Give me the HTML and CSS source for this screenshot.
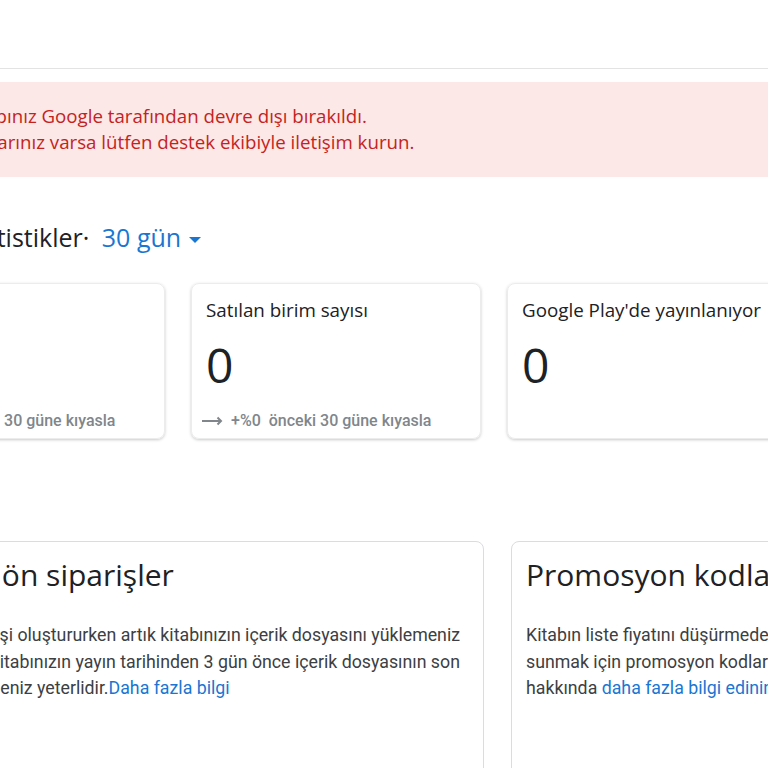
FILE: index.html
```html
<!DOCTYPE html>
<html>
<head>
    <meta charset="utf-8">
    <link rel="stylesheet" href="styles.css">
    <title>Kontrol paneli</title>
</head>
<body>
    <div class="topbar"></div>
    <div class="page">
        <div class="alert">
            <p>Hesabınız Google tarafından devre dışı bırakıldı.</p>
            <p>Sorularınız varsa lütfen destek ekibiyle iletişim kurun.</p>
        </div>

        <h2 class="stats-title">İstatistikler· <span class="range">30 gün <span class="caret"></span></span></h2>

        <div class="stats">
            <div class="stat-card">
                <div class="stat-name">Kazanç</div>
                <div class="stat-value">0</div>
                <div class="stat-trend">
                    <svg class="arrow" viewBox="0 0 24 12" width="24" height="12"><path d="M2 6h19M17.5 2.5l3.5 3.5-3.5 3.5" fill="none" stroke="#80868b" stroke-width="2"/></svg>
                    <span>+%0</span> önceki 30 güne kıyasla
                </div>
            </div>
            <div class="stat-card">
                <div class="stat-name">Satılan birim sayısı</div>
                <div class="stat-value">0</div>
                <div class="stat-trend">
                    <svg class="arrow" viewBox="0 0 24 12" width="24" height="12"><path d="M2 6h19M17.5 2.5l3.5 3.5-3.5 3.5" fill="none" stroke="#80868b" stroke-width="2"/></svg>
                    <span>+%0</span> önceki 30 güne kıyasla
                </div>
            </div>
            <div class="stat-card">
                <div class="stat-name">Google Play'de yayınlanıyor</div>
                <div class="stat-value">0</div>
            </div>
            <div class="stat-card">
                <div class="stat-name">Ön siparişler</div>
                <div class="stat-value">0</div>
            </div>
        </div>

        <div class="news">
            <div class="news-card">
                <h3>Çabuk ön siparişler</h3>
                <p>Bir ön siparişi oluştururken artık kitabınızın içerik dosyasını yüklemeniz<br>
                şart değil. Kitabınızın yayın tarihinden 3 gün önce içerik dosyasının son<br>
                hâlini eklemeniz yeterlidir.<a href="#">Daha fazla bilgi</a></p>
            </div>
            <div class="news-card">
                <h3>Promosyon kodları</h3>
                <p>Kitabın liste fiyatını düşürmeden okuyuculara indirim<br>
                sunmak için promosyon kodları oluşturabilirsiniz. Promosyon kodları<br>
                hakkında <a href="#">daha fazla bilgi edinin</a>.</p>
            </div>
        </div>
    </div>
</body>
</html>
```

FILE: styles.css
```css
body {
    margin: 0;
    overflow: hidden;
    background: #fff;
    color: #202124;
    font-family: Roboto, "Liberation Sans", sans-serif;
}
.topbar {
    height: 68px;
    border-bottom: 1px solid #e3e3e3;
}
.page {
    margin-left: -125px;
    width: 1300px;
    padding-top: 13px;
}
.alert {
    background: #fce8e6;
    color: #c5221f;
    font-family: "Open Sans", sans-serif;
    font-size: 18.7px;
    line-height: 26px;
    padding: 21px 0 22px 77px;
}
.alert p {
    margin: 0;
}
.stats-title {
    font-family: "Open Sans", sans-serif;
    font-weight: 400;
    font-size: 25px;
    margin: 44px 0 0 80px;
    line-height: 32px;
}
.range {
    color: #1976d2;
    margin-left: 6px;
}
.caret {
    display: inline-block;
    border-left: 6px solid transparent;
    border-right: 6px solid transparent;
    border-top: 6px solid #1976d2;
    vertical-align: middle;
    margin-left: 1px;
}
.stats {
    display: grid;
    grid-template-columns: repeat(4, 290px);
    gap: 26px;
    margin-top: 30px;
}
.stat-card {
    height: 156px;
    box-sizing: border-box;
    padding: 14px 14px 0;
    border-radius: 8px;
    box-shadow: 0 1px 3px rgba(60, 64, 67, 0.28);
    border: 1px solid #ececec;
}
.stat-name {
    font-family: "Open Sans", sans-serif;
    font-size: 18.8px;
    line-height: 24px;
}
.stat-value {
    font-family: "Open Sans", sans-serif;
    font-size: 48px;
    line-height: 56px;
    margin-top: 15px;
}
.stat-trend {
    margin-top: 18px;
    font-size: 16px;
    font-weight: 500;
    color: #80868b;
    display: flex;
    align-items: center;
}
.stat-trend .arrow {
    margin: 0 7px 0 -6px;
}
.stat-trend span {
    margin-right: 8px;
}
.news {
    display: grid;
    grid-template-columns: repeat(2, 593px);
    gap: 27px;
    margin: 102px 0 0 16px;
}
.news-card {
    border: 1px solid #dadce0;
    border-radius: 8px;
    height: 260px;
    padding: 0 14px;
}
.news-card h3 {
    font-family: "Open Sans", sans-serif;
    font-weight: 400;
    font-size: 30px;
    line-height: 40px;
    margin: 13px 0 0;
}
.news-card p {
    font-size: 17.75px;
    line-height: 26.5px;
    margin: 27px 0 0;
    color: #3c4043;
    white-space: nowrap;
}
.news-card a {
    color: #1976d2;
    text-decoration: none;
}
```
